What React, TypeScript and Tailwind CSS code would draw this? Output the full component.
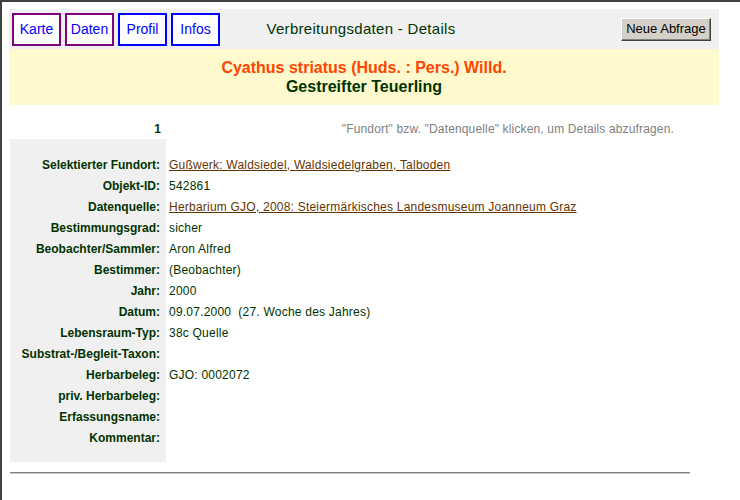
import React from "react";

const rows: { label: string; value?: string; link?: boolean }[] = [
  { label: "Selektierter Fundort:", value: "Gußwerk: Waldsiedel, Waldsiedelgraben, Talboden", link: true },
  { label: "Objekt-ID:", value: "542861" },
  { label: "Datenquelle:", value: "Herbarium GJO, 2008: Steiermärkisches Landesmuseum Joanneum Graz", link: true },
  { label: "Bestimmungsgrad:", value: "sicher" },
  { label: "Beobachter/Sammler:", value: "Aron Alfred" },
  { label: "Bestimmer:", value: "(Beobachter)" },
  { label: "Jahr:", value: "2000" },
  { label: "Datum:", value: "09.07.2000\u00a0\u00a0(27. Woche des Jahres)" },
  { label: "Lebensraum-Typ:", value: "38c Quelle" },
  { label: "Substrat-/Begleit-Taxon:" },
  { label: "Herbarbeleg:", value: "GJO: 0002072" },
  { label: "priv. Herbarbeleg:" },
  { label: "Erfassungsname:" },
  { label: "Kommentar:" },
];

const tabs = [
  { t: "Karte", c: "border-[#800080]" },
  { t: "Daten", c: "border-[#800080]" },
  { t: "Profil", c: "border-[#0000ff]" },
  { t: "Infos", c: "border-[#0000ff]" },
];

export default function App() {
  return (
    <div
      className="w-[740px] h-[500px] overflow-hidden bg-white border-t-2 border-l-2 border-[#404040] pl-[7px] pt-[7px]"
      style={{ fontFamily: '"Liberation Sans", Arial, sans-serif' }}
    >
      <div className="w-[710px]">
        <div className="grid grid-cols-[1fr_auto_1fr] items-center h-[40px] bg-[#f0f0f0] px-[3px]">
          <div className="flex gap-[4px]">
            {tabs.map((x) => (
              <div
                key={x.t}
                className={`h-[33px] w-[49px] border-2 ${x.c} bg-white flex items-center justify-center text-[14px] text-[#0000ff]`}
              >
                {x.t}
              </div>
            ))}
          </div>
          <div className="text-[15px] tracking-[0.3px] text-[#003300] pr-[6px]">Verbreitungsdaten - Details</div>
          <div className="flex justify-end pr-[5px]">
            <button className="h-[23px] w-[90px] bg-[#d4d0c8] text-[13px] text-black border border-t-white border-l-white border-r-[#404040] border-b-[#404040] shadow-[inset_-1px_-1px_0_#808080]">
              Neue Abfrage
            </button>
          </div>
        </div>
        <div className="h-[56px] bg-[#fffacd] flex flex-col items-center justify-center font-bold text-[16px] leading-[19px]">
          <div className="text-[#ff4500]">Cyathus striatus (Huds. : Pers.) Willd.</div>
          <div className="text-[#003300]">Gestreifter Teuerling</div>
        </div>
      </div>
      <div className="ml-px w-[680px] text-[12px]">
        <div className="flex h-[20px] mt-[14px] items-center">
          <div className="w-[156px] text-right pr-[5px] font-bold text-[#003300]">1</div>
          <div className="flex-1 text-right pr-[16px] text-[#808080] tracking-[0.15px]">
            "Fundort" bzw. "Datenquelle" klicken, um Details abzufragen.
          </div>
        </div>
        <div className="flex">
          <div className="w-[156px] bg-[#f0f0f0] pt-[15px] pb-[14px]">
            {rows.map((r) => (
              <div key={r.label} className="h-[21px] flex items-center justify-end pr-[6px] font-bold text-[#003300]">
                {r.label}
              </div>
            ))}
          </div>
          <div className="flex-1 pt-[15px] pb-[14px] pl-[3px] tracking-[0.22px]">
            {rows.map((r) => (
              <div key={r.label} className="h-[21px] flex items-center text-[#003300] whitespace-pre">
                {r.value ? (
                  r.link ? (
                    <span className="text-[#663300] underline">{r.value}</span>
                  ) : (
                    <span>{r.value}</span>
                  )
                ) : null}
              </div>
            ))}
          </div>
        </div>
        <div className="mt-[10px] h-[2px] border-t border-t-[#808080] border-b border-b-[#c8c8c8]" />
      </div>
    </div>
  );
}
